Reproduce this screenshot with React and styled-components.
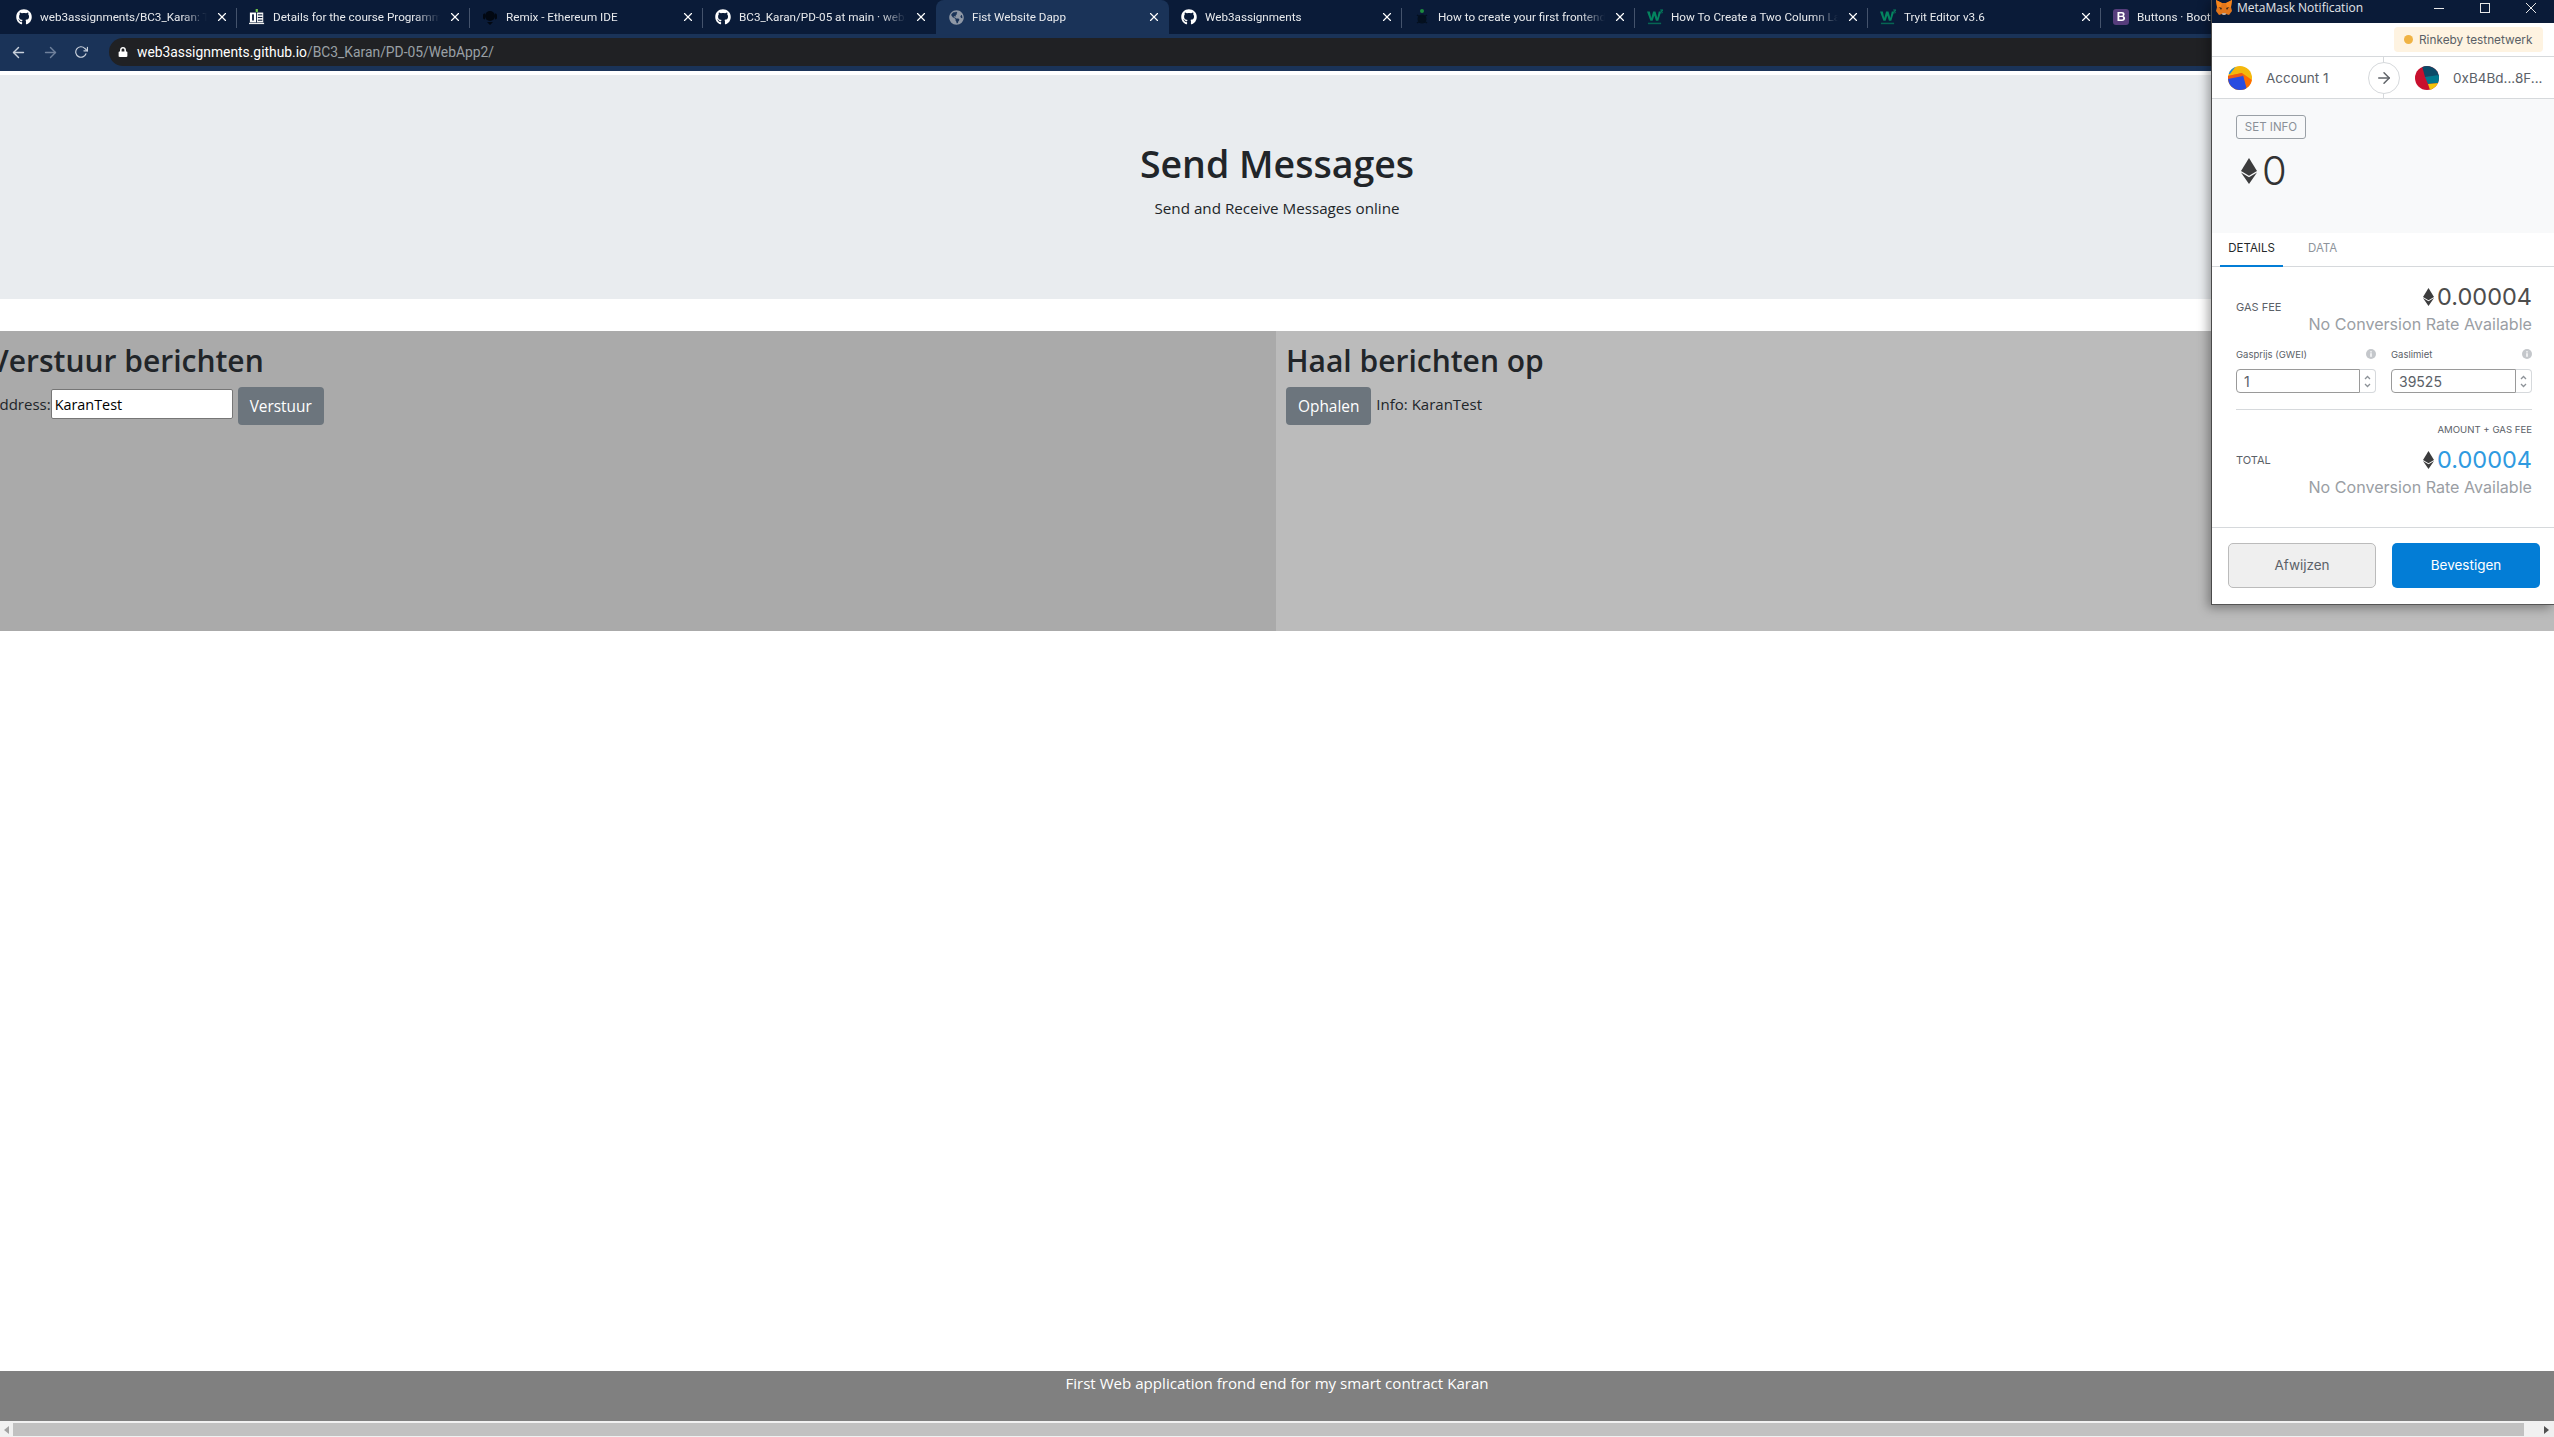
import React from "react";
import styled, { createGlobalStyle } from "styled-components";
import { FaGithub, FaGlobeAmericas, FaLock } from "react-icons/fa";
import { FiArrowLeft, FiArrowRight, FiRotateCw, FiX } from "react-icons/fi";

const Global = createGlobalStyle`
  html, body { margin: 0; padding: 0; height: 100%; overflow: hidden; background: #fff; }
  * { box-sizing: border-box; }
`;
const pageFont = `"Open Sans", "Noto Sans", sans-serif`;
const mmFont = `"Inter", "Lato", sans-serif`;

const Page = styled.div`
  position: relative; width: 2554px; height: 1437px; display: flex; flex-direction: column;
  font-family: ${pageFont}; color: #212529; overflow: hidden;
`;
const TabStrip = styled.div`
  height: 34px; background: #0a1b38; display: flex; padding-left: 4px; flex: none;
`;
const Tab = styled.div`
  width: 233px; flex: none; height: 34px; padding: 0 8px 0 12px; display: flex; align-items: center; gap: 8px;
  position: relative; color: #e8eaed; font: 11.7px Roboto, sans-serif;
  background: ${p => p.$active ? "#1a3358" : "transparent"};
  border-radius: ${p => p.$active ? "8px 8px 0 0" : "0"};
  &::after {
    content: ""; position: absolute; right: 0; top: 8px; height: 20px; width: 1px;
    background: ${p => p.$sep ? "#44536c" : "transparent"};
  }
`;
const Fav = styled.span`
  width: 16px; height: 16px; flex: none; display: flex; align-items: center; justify-content: center; color: #fff;
`;
const TabTitle = styled.span`
  flex: 1; white-space: nowrap; overflow: hidden;
  mask-image: linear-gradient(to right, #000 85%, transparent 100%);
`;
const TabClose = styled.span`
  width: 14px; display: flex; color: #fff; flex: none; font-size: 14px;
`;
const NavBar = styled.div`
  height: 37px; flex: none; background: #1a3358; display: flex; align-items: center; padding: 0 0 1px 10px;
`;
const NavBtn = styled.span`
  width: 32px; display: flex; color: ${p => p.$dim ? "#6f819c" : "#c9d1dc"}; font-size: 17px;
`;
const Address = styled.div`
  margin-left: 3px; width: 2400px; height: 28px; border-radius: 14px 0 0 14px; background: #202124;
  display: flex; align-items: center; padding-left: 9px; gap: 9px; font: 13.85px Roboto, sans-serif; color: #9aa0a6;
`;
const Host = styled.span`color: #fff;`;
const Jumbo = styled.header`
  margin-top: 4px; height: 224px; flex: none; background: #e9ecef; padding-top: 64px; text-align: center;
`;
const Title = styled.h1`
  margin: 0 0 7px; font-size: 37.5px; line-height: 50px; font-weight: 600;
`;
const Lead = styled.p`margin: 0; font-size: 15.2px; line-height: 24px;`;
const Columns = styled.div`
  margin-top: 32px; height: 300px; display: grid; grid-template-columns: 1276px 1278px; flex: none;
`;
const Column = styled.section`
  background: ${p => p.$bg}; padding: 10px; overflow: hidden;
`;
const Shift = styled.div`margin-left: ${p => p.$x}px;`;
const Heading = styled.h2`
  margin: 0 0 7px; font-size: 30px; line-height: 39px; font-weight: 600;
`;
const FormRow = styled.div`display: flex; align-items: flex-start; font-size: 15px; line-height: 24px;`;
const Label = styled.span`margin-top: 5px; margin-left: ${p => p.$ml || 0}px; white-space: nowrap;`;
const TextInput = styled.input`
  width: 182px; height: 30px; margin: 2px 0 0 0; border: 1px solid #767676; border-radius: 2px; padding: 1px 3px;
  background: #fff; color: #000; font: 14.4px ${pageFont}; outline: none;
`;
const Btn = styled.button`
  height: 38px; margin-left: ${p => p.$ml || 0}px; padding: 0 ${p => p.$pad || 12}px; background: #6c757d; color: #fff; border: 0;
  border-radius: 4px; font: 15.4px ${pageFont};
`;
const Spacer = styled.div`flex: 1;`;
const Footer = styled.footer`
  height: 50px; flex: none; background: #808080; color: #fff; text-align: center; font-size: 15.1px; line-height: 24px;
`;
const Scrollbar = styled.div`
  height: 16px; flex: none; background: #f1f1f1; display: flex; align-items: center; padding-top: 1px; position: relative;
`;
const ScrollArrow = styled.span`
  width: 13px; flex: none; display: flex; justify-content: center;
`;
const EndArrow = styled(ScrollArrow)`position: absolute; right: 1px;`;
const Thumb = styled.div`flex: 1; height: 13px; background: #c1c1c1; margin-right: 30px;`;

/* MetaMask window */
const Win = styled.aside`
  position: absolute; left: 2211px; top: 0; width: 343px; height: 605px; background: #fff;
  border-left: 1px solid #4a4a4a; border-bottom: 1px solid #555;
  box-shadow: -3px 3px 10px rgba(0,0,0,.35); font-family: ${mmFont}; color: #24272a;
  display: flex; flex-direction: column;
`;
const WinTitle = styled.div`
  height: 23px; flex: none; background: #0a1b38; color: #e4e6ea; display: flex; align-items: flex-start; padding-left: 4px; gap: 5px;
  font: 12px/16px "Open Sans", sans-serif;
`;
const WinControls = styled.div`
  margin-left: auto; display: flex; align-items: flex-start; color: #e8e8e8;
`;
const WinCtl = styled.span`width: 46px; height: 16px; display: flex; align-items: center; justify-content: center;`;
const NetRow = styled.div`
  height: 34px; flex: none; padding: 4px 11px 0 0; display: flex; justify-content: flex-end; align-items: flex-start;
  border-bottom: 1px solid #d6d9dc;
`;
const NetPill = styled.div`
  width: 149px; height: 25px; background: #fef3e1; border-radius: 4px; display: flex; align-items: center; gap: 6px; padding-left: 10px;
  font-size: 11.8px; color: #5a5f66; white-space: nowrap;
`;
const NetDot = styled.span`width: 9px; height: 9px; border-radius: 50%; background: #f0b344; flex: none;`;
const AccRow = styled.div`
  height: 42px; flex: none; display: grid; grid-template-columns: 156px 32px 1fr; align-items: center; border-bottom: 1px solid #d6d9dc; position: relative;
  &::before { content: ""; position: absolute; left: 171px; top: 0; bottom: 0; width: 1px; background: #d6d9dc; }
`;
const Acc = styled.div`
  display: flex; align-items: center; padding-left: ${p => p.$pl}px; gap: 14px; font-size: 13.5px; color: #5b6168; white-space: nowrap;
`;
const ArrowCircle = styled.div`
  width: 32px; height: 32px; border-radius: 50%; border: 1px solid #d6d9dc; background: #fff; position: relative; z-index: 1;
  display: flex; align-items: center; justify-content: center; color: #5f6368; font-size: 18px;
`;
const Summary = styled.div`
  height: 134px; flex: none; background: #f8f9fa; padding: 16px 0 0 24px;
`;
const InfoTag = styled.div`
  width: 70px; height: 24px; border: 1px solid #9aa0a6; border-radius: 3px; font-size: 11.5px; color: #8a9098;
  display: flex; align-items: center; justify-content: center;
`;
const BigAmt = styled.div`
  margin: 10px 0 0 5px; display: flex; align-items: center; gap: 5px; font-size: 40px; line-height: 44px; font-weight: 300; color: #333;
`;
const TabsRow = styled.div`
  height: 34px; flex: none; display: flex; padding-left: 8px; border-bottom: 1px solid #d6d9dc;
`;
const MTab = styled.div`
  height: 34px; padding: 7px 8px 0; font-size: 11.5px; line-height: 16px; margin-right: ${p => p.$mr || 0}px;
  color: ${p => p.$active ? "#24272a" : "#8e949b"};
  border-bottom: ${p => p.$active ? "2px solid #037dd6" : "none"};
  min-width: ${p => p.$active ? "63px" : "0"}; text-align: center;
`;
const Details = styled.div`
  padding: 16px 22px 0 24px; height: 261px; flex: none; border-bottom: 1px solid #d6d9dc;
`;
const SumRow = styled.div`
  display: flex; justify-content: space-between; align-items: ${p => p.$top ? "flex-start" : "center"};
`;
const SumLabel = styled.div`font-size: 11px; color: #5b6168; margin-top: ${p => p.$mt || 0}px;`;
const SumValues = styled.div`text-align: right;`;
const Amt = styled.div`
  display: flex; align-items: center; justify-content: flex-end; gap: 3px; font-size: 23.5px; line-height: 28px; font-weight: 400;
  color: ${p => p.$blue ? "#2f9ae0" : "#4d4d4d"};
`;
const Conv = styled.div`
  font-size: 16.1px; line-height: 20px; margin-top: ${p => p.$mt ?? 3}px; color: #9a9ea4; white-space: nowrap;
`;
const Fields = styled.div`
  display: grid; grid-template-columns: 140px 141px; column-gap: 15px; margin-top: 13px;
`;
const FieldHead = styled.div`
  display: flex; justify-content: space-between; align-items: center; height: 14px; font-size: 9.5px; color: #5b6168; margin-bottom: 8px;
`;
const FieldBox = styled.div`display: flex; height: 24px;`;
const FieldInput = styled.input`
  width: 125px; height: 24px; border: 1px solid #9a9a9a; border-radius: 4px 0 0 4px; padding: 0 7px; background: #fff;
  font: 14px ${mmFont}; color: #5b6168; outline: none; min-width: 0; flex: 1;
`;
const Stepper = styled.div`
  width: 16px; flex: none; border: 1px solid #d6d9dc; border-left: none; border-radius: 0 4px 4px 0;
  display: flex; flex-direction: column; align-items: center; justify-content: space-around; padding: 3px 0;
`;
const Divider = styled.div`height: 1px; background: #d6d9dc; margin: 16px 0 14px;`;
const Note = styled.div`text-align: right; font-size: 9.6px; line-height: 12px; color: #5b6168; margin-bottom: 10px;`;
const Actions = styled.div`
  display: grid; grid-template-columns: 148px 148px; column-gap: 16px; padding: 15px 0 0 16px;
`;
const ActionBtn = styled.button`
  height: 45px; border-radius: 5px; font: 13.5px ${mmFont}; padding-bottom: 2px;
  background: ${p => p.$primary ? "#037dd6" : "#efefef"}; color: ${p => p.$primary ? "#fff" : "#5b6168"};
  border: ${p => p.$primary ? "none" : "1px solid #bbb"};
`;

const W3 = () => (
  <svg width="17" height="17" viewBox="0 0 17 17">
    <path d="M0 2h3l1.5 7L6.5 2h2.5l2 7 1.5-7H15l-3 10H9.5L7.8 6.5 6 12H3.6z" fill="#04845f" />
    <path d="M14 0h3v1l-1 1c1 .3 1 2-.5 2H14v-.6h1.3c.6 0 .6-1 0-1H14.6V2l1-1H14z" fill="#04845f" />
    <rect x="1" y="14" width="14" height="1.6" fill="#04845f" opacity=".7" />
  </svg>
);
const Boot = () => (
  <svg width="16" height="16" viewBox="0 0 16 16">
    <rect width="16" height="16" rx="3" fill="#563d7c" />
    <path fillRule="evenodd" d="M4.5 3h4.4c1.7 0 2.7.9 2.7 2.2 0 1-.6 1.7-1.4 1.9 1.1.2 1.9 1 1.9 2.2 0 1.6-1.2 2.7-3.1 2.7H4.5zM6.3 4.4v2.3h2c.9 0 1.5-.4 1.5-1.2s-.5-1.1-1.4-1.1zm0 3.6v2.6h2.3c1 0 1.6-.5 1.6-1.3S9.600 8 8.500 8z" fill="#fff" />
  </svg>
);
const Doc = () => (
  <svg width="18" height="18" viewBox="0 0 18 18">
    <rect x="1" y="4" width="7" height="11" fill="#fff" />
    <rect x="9" y="4" width="7" height="11" fill="#f4f4f4" />
    <rect x="3.500" y="6" width="2" height="7" fill="#0a1b38" />
    <rect x="10" y="6" width="5" height="1.2" fill="#0a1b38" />
    <rect x="10" y="9" width="5" height="1.2" fill="#0a1b38" />
    <rect x="10" y="12" width="5" height="1.2" fill="#0a1b38" />
    <rect x="7.500" y="0" width="2.500" height="3.500" fill="#6fc24a" />
    <rect x="0" y="15.500" width="17" height="1.500" fill="#eee" />
  </svg>
);
const Remix = () => (
  <svg width="16" height="18" viewBox="0 0 16 18">
    <circle cx="8" cy="8" r="5" fill="#020812" />
    <path d="M1 7c0-1 2-2 2-1v5c0 1-2 0-2-1zM15 7c0-1-2-2-2-1v5c0 1 2 0 2-1zM5 14h6l-3 3z" fill="#020812" />
  </svg>
);
const Turtle = () => (
  <svg width="16" height="20" viewBox="0 0 16 20">
    <circle cx="8" cy="4" r="2" fill="#1d8a3f" />
    <circle cx="8" cy="12" r="4.500" fill="#04101f" />
    <path d="M3 8l3 2M13 8l-3 2M3 16l3-2M13 16l-3-2" stroke="#04101f" strokeWidth="1.500" />
  </svg>
);
const Fox = () => (
  <svg width="16" height="16" viewBox="0 0 16 16" style={{ flex: "none" }}>
    <path d="M0 0l6 3h4l6-3-1 7 1 4-3 4-3-1H6l-3 1-3-4 1-4z" fill="#e2761b" />
    <path d="M3 7l3 1-1 2zM13 7l-3 1 1 2z" fill="#3b2a1c" />
    <path d="M6 13h4l-.5 2h-3z" fill="#c0ac9d" />
    <path d="M0 0l6 3-1 4H1zM16 0l-6 3 1 4h4z" fill="#f6851b" />
  </svg>
);
const Eth = ({ w, h }) => (
  <svg width={w} height={h} viewBox="0 0 16 26" style={{ flex: "none" }}>
    <path d="M8 0l8 13-8 4.800L0 13z" fill="#3c3c3d" />
    <path d="M8 19.300l8-4.800-8 11.500L0 14.500z" fill="#3c3c3d" />
  </svg>
);
const Jazz1 = () => (
  <svg width="24" height="24" viewBox="0 0 24 24" style={{ flex: "none" }}>
    <clipPath id="ja"><circle cx="12" cy="12" r="12" /></clipPath>
    <g clipPath="url(#ja)">
      <rect width="24" height="24" fill="#f5b80c" />
      <path d="M0 0h8L2 8H0z" fill="#1888e8" />
      <path d="M0 10L14 7l10 7v10H0z" fill="#ff6a00" />
      <path d="M0 12L15 9l4 15H0z" fill="#2a4be0" />
      <path d="M0 10L14 7l1 3L0 13z" fill="#f05a14" />
    </g>
  </svg>
);
const Jazz2 = () => (
  <svg width="24" height="24" viewBox="0 0 24 24" style={{ flex: "none" }}>
    <clipPath id="jb"><circle cx="12" cy="12" r="12" /></clipPath>
    <g clipPath="url(#jb)">
      <rect width="24" height="24" fill="#c8102e" />
      <path d="M7 0h17v10L10 11z" fill="#0b4a68" />
      <path d="M10 11l14-2v8l-11 1z" fill="#00788f" />
      <path d="M13 18l11-1v7H15z" fill="#f3c60a" />
    </g>
  </svg>
);
const Info = () => (
  <svg width="10" height="10" viewBox="0 0 10 10">
    <circle cx="5" cy="5" r="5" fill="#c4c7cb" />
    <rect x="4.300" y="4.200" width="1.400" height="3.600" fill="#fff" />
    <rect x="4.300" y="2.200" width="1.400" height="1.300" fill="#fff" />
  </svg>
);
const Chev = ({ up }) => (
  <svg width="7" height="5" viewBox="0 0 7 5">
    <path d={up ? "M1 4l2.500-2.500L6 4" : "M1 1l2.500 2.500L6 1"} fill="none" stroke="#8d9298" strokeWidth="1.300" />
  </svg>
);

const tabs = [
  { icon: <FaGithub size={16} />, title: "web3assignments/BC3_Karan: This repository", sep: true },
  { icon: <Doc />, title: "Details for the course Programming", sep: true },
  { icon: <Remix />, title: "Remix - Ethereum IDE", sep: true },
  { icon: <FaGithub size={16} />, title: "BC3_Karan/PD-05 at main · web3assignments", sep: false },
  { icon: <FaGlobeAmericas size={15} color="#8f98a6" />, title: "Fist Website Dapp", active: true, sep: false },
  { icon: <FaGithub size={16} />, title: "Web3assignments", sep: true },
  { icon: <Turtle />, title: "How to create your first frontend", sep: true },
  { icon: <W3 />, title: "How To Create a Two Column Layout", sep: true },
  { icon: <W3 />, title: "Tryit Editor v3.6", sep: true },
  { icon: <Boot />, title: "Buttons · Bootstrap", sep: false },
];

function FeeField({ label, value }) {
  return (
    <div>
      <FieldHead>{label}<Info /></FieldHead>
      <FieldBox>
        <FieldInput readOnly value={value} />
        <Stepper><Chev up /><Chev /></Stepper>
      </FieldBox>
    </div>
  );
}

export default function App() {
  return (
    <Page>
      <Global />
      <TabStrip>
        {tabs.map(t => (
          <Tab key={t.title} $active={t.active} $sep={t.sep}>
            <Fav>{t.icon}</Fav>
            <TabTitle>{t.title}</TabTitle>
            <TabClose><FiX /></TabClose>
          </Tab>
        ))}
      </TabStrip>
      <NavBar>
        <NavBtn><FiArrowLeft /></NavBtn>
        <NavBtn $dim><FiArrowRight /></NavBtn>
        <NavBtn><FiRotateCw size={14} /></NavBtn>
        <Address>
          <FaLock size={10} color="#fff" />
          <span><Host>web3assignments.github.io</Host>/BC3_Karan/PD-05/WebApp2/</span>
        </Address>
      </NavBar>
      <Jumbo>
        <Title>Send Messages</Title>
        <Lead>Send and Receive Messages online</Lead>
      </Jumbo>
      <Columns>
        <Column $bg="#aaaaaa">
          <Shift $x={-20}>
            <Heading>Verstuur berichten</Heading>
            <FormRow>
              <Label>Address:</Label>
              <TextInput readOnly value="KaranTest" />
              <Btn $ml={5}>Verstuur</Btn>
            </FormRow>
          </Shift>
        </Column>
        <Column $bg="#bbbbbb">
          <Heading>Haal berichten op</Heading>
          <FormRow>
            <Btn>Ophalen</Btn>
            <Label $ml={5}>Info: KaranTest</Label>
          </FormRow>
        </Column>
      </Columns>
      <Spacer />
      <Footer>First Web application frond end for my smart contract Karan</Footer>
      <Scrollbar>
        <ScrollArrow>
          <svg width="5" height="8" viewBox="0 0 5 8"><path d="M5 0v8L0 4z" fill="#a3a3a3" /></svg>
        </ScrollArrow>
        <Thumb />
        <EndArrow>
          <svg width="5" height="8" viewBox="0 0 5 8"><path d="M0 0v8l5-4z" fill="#505050" /></svg>
        </EndArrow>
      </Scrollbar>

      <Win>
        <WinTitle>
          <Fox />
          MetaMask Notification
          <WinControls>
            <WinCtl><svg width="10" height="10"><rect y="5" width="10" height="1" fill="#e8e8e8" /></svg></WinCtl>
            <WinCtl><svg width="10" height="10"><rect x=".5" y=".5" width="9" height="9" fill="none" stroke="#e8e8e8" /></svg></WinCtl>
            <WinCtl><svg width="10" height="10"><path d="M0 0l10 10M10 0L0 10" stroke="#e8e8e8" /></svg></WinCtl>
          </WinControls>
        </WinTitle>
        <NetRow><NetPill><NetDot />Rinkeby testnetwerk</NetPill></NetRow>
        <AccRow>
          <Acc $pl={16}><Jazz1 />Account 1</Acc>
          <ArrowCircle><FiArrowRight /></ArrowCircle>
          <Acc $pl={15}><Jazz2 />0xB4Bd...8F...</Acc>
        </AccRow>
        <Summary>
          <InfoTag>SET INFO</InfoTag>
          <BigAmt><Eth w={16} h={26} />0</BigAmt>
        </Summary>
        <TabsRow>
          <MTab $active $mr={17}>DETAILS</MTab>
          <MTab>DATA</MTab>
        </TabsRow>
        <Details>
          <SumRow>
            <SumLabel $mt={-4}>GAS FEE</SumLabel>
            <SumValues>
              <Amt><Eth w={11} h={18} />0.00004</Amt>
              <Conv>No Conversion Rate Available</Conv>
            </SumValues>
          </SumRow>
          <Fields>
            <FeeField label="Gasprijs (GWEI)" value="1" />
            <FeeField label="Gaslimiet" value="39525" />
          </Fields>
          <Divider />
          <Note>AMOUNT + GAS FEE</Note>
          <SumRow $top>
            <SumLabel $mt={7}>TOTAL</SumLabel>
            <SumValues>
              <Amt $blue><Eth w={11} h={18} />0.00004</Amt>
              <Conv $mt={3}>No Conversion Rate Available</Conv>
            </SumValues>
          </SumRow>
        </Details>
        <Actions>
          <ActionBtn>Afwijzen</ActionBtn>
          <ActionBtn $primary>Bevestigen</ActionBtn>
        </Actions>
      </Win>
    </Page>
  );
}
